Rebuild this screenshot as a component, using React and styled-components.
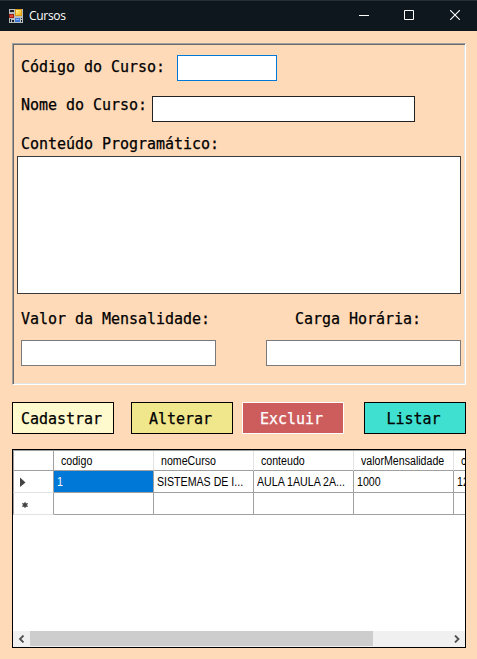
import React from 'react';
import styled, { createGlobalStyle } from 'styled-components';

const GlobalStyle = createGlobalStyle`
  * { box-sizing: border-box; }
  body { margin: 0; background: #ffdab9; overflow: hidden; }
`;

const Window = styled.div`
  width: 477px;
  height: 659px;
  background: #ffdab9;
  display: flex;
  flex-direction: column;
  overflow: hidden;
  color: #000;
`;

const TitleBar = styled.header`
  height: 31px;
  flex: none;
  background: #0e171d;
  border-top: 1px solid #252e34;
  display: flex;
  align-items: center;
  padding-left: 9px;
  color: #fff;
`;

const Title = styled.span`
  flex: 1;
  margin-left: 4px;
  font: 12px/16px 'Open Sans', sans-serif;
  letter-spacing: -0.3px;
`;

const Controls = styled.div`
  display: flex;
  height: 30px;
`;

const Control = styled.button`
  width: 46px;
  height: 28px;
  padding: 0;
  border: 0;
  background: transparent;
  display: grid;
  place-items: center;
  &:first-child { padding-left: 2px; }
  &:last-child { width: 45px; }
  svg { display: block; }
`;

const Content = styled.main`
  padding: 12px 11px 11px 12px;
`;

const Panel = styled.section`
  height: 342px;
  padding: 1px;
  border: 1px solid;
  border-color: #a0a0a0 #fff #fff #a0a0a0;
  box-shadow: inset 1px 1px #696969, inset -1px -1px #e3e3e3;
`;

const Field = styled.div`
  display: flex;
  padding-left: 7px;
  height: ${(p) => p.$height}px;
  padding-top: ${(p) => p.$top || 0}px;
`;

const Label = styled.label`
  font: 15px/20px 'DejaVu Sans Mono', monospace;
  letter-spacing: -0.03px;
  -webkit-text-stroke: 0.25px currentColor;
  white-space: pre;
  width: ${(p) => (p.$width ? p.$width + 'px' : 'auto')};
  margin-top: ${(p) => p.$top || 0}px;
`;

const TextBox = styled.input`
  display: block;
  width: ${(p) => p.$width}px;
  height: 26px;
  padding: 2px 4px;
  border: 1px solid ${(p) => p.$border || '#7a7a7a'};
  border-radius: 0;
  background: #fff;
  outline: 0;
`;

const TextArea = styled.textarea`
  display: block;
  width: 444px;
  height: 138px;
  margin-left: 3px;
  border: 1px solid #3a3a3a;
  border-radius: 0;
  background: #fff;
  resize: none;
  outline: 0;
`;

const Split = styled.div`
  display: flex;
  justify-content: space-between;
  padding: ${(p) => p.$top}px 3px 0 7px;
`;

const Actions = styled.div`
  display: grid;
  grid-template-columns: 119px 111px 122px 102px;
  margin-top: 17px;
`;

const Action = styled.button`
  width: 102px;
  height: 32px;
  padding: 1px 3px 0 0;
  border: 1px solid ${(p) => p.$border || '#000'};
  border-radius: 0;
  background: ${(p) => p.$fill};
  color: ${(p) => p.$color || '#000'};
  font: 15px/20px 'DejaVu Sans Mono', monospace;
  letter-spacing: -0.03px;
  -webkit-text-stroke: 0.25px currentColor;
  text-align: center;
`;

const Grid = styled.section`
  margin-top: 15px;
  height: 199px;
  border: 1px solid #000;
  background: #fff;
  overflow: hidden;
  display: flex;
  flex-direction: column;
`;

const Table = styled.div`
  flex: 1;
  width: 541px;
  border-top: 1px solid #a0a0a0;
`;

const Row = styled.div`
  display: grid;
  grid-template-columns: 41px repeat(5, 100px);
  height: ${(p) => p.$height}px;
`;

const Cell = styled.div`
  border-right: 1px solid #a0a0a0;
  border-bottom: 1px solid #a0a0a0;
  padding-left: 3px;
  overflow: hidden;
  white-space: nowrap;
  font: 12px/22px 'Liberation Sans', sans-serif;
  background: ${(p) => (p.$selected ? '#0078d7' : '#fff')};
  color: ${(p) => (p.$selected ? '#fff' : '#000')};
`;

const CellText = styled.span`
  display: block;
  width: max-content;
  transform: scaleX(0.885);
  transform-origin: 0 0;
`;

const HeadCell = styled(Cell)`
  padding-left: 7px;
  line-height: 21px;
  border-right-color: #e3e3e3;
`;

const RowHead = styled(Cell)`
  border-left: 1px solid #a0a0a0;
  border-bottom-color: ${(p) => (p.$dark ? '#a0a0a0' : '#e3e3e3')};
  padding: 0 0 0 6px;
  display: flex;
  align-items: center;
  svg { display: block; }
`;

const ScrollBar = styled.div`
  height: 16px;
  flex: none;
  display: flex;
  background: #f0f0f0;
`;

const ScrollButton = styled.div`
  width: 17px;
  height: 15px;
  display: grid;
  place-items: center;
`;

const Track = styled.div`
  flex: 1;
`;

const Thumb = styled.div`
  width: 343px;
  height: 15px;
  background: #cdcdcd;
`;

const columns = ['codigo', 'nomeCurso', 'conteudo', 'valorMensalidade', 'cargaHoraria'];
const values = ['1', 'SISTEMAS DE I...', 'AULA 1AULA 2A...', '1000', '120'];

function FormIcon() {
  return (
    <svg width="16" height="16" viewBox="0 0 16 16" shapeRendering="crispEdges">
      <defs>
        <linearGradient id="gold" x1="0" y1="0" x2="1" y2="1">
          <stop offset="0" stopColor="#fff0a0" />
          <stop offset="1" stopColor="#f0b400" />
        </linearGradient>
      </defs>
      <path fill="#b9bcbd" d="M0 1h14v14H0z" />
      <path fill="#17202a" d="M1 2h4v3H1zM1 11h1v3H1zM3 12h2v2H3zM12 10h1v1h-1zM12 12h1v2h-1z" />
      <path fill="#b9bcbd" d="M1 4h4v1H1z" />
      <path fill="#d89a18" d="M6 1h7v7H6z" />
      <path fill="url(#gold)" d="M7 2h5v5H7z" />
      <path fill="#9d2018" d="M0 6h5v4H0z" />
      <path fill="#e84a35" d="M1 7h3v2H1z" />
      <path fill="#3f78dc" d="M6 10h5v4H6z" />
      <path fill="#8bb4ff" d="M7 11h3v1H7z" />
    </svg>
  );
}

export default function App() {
  return (
    <Window>
      <GlobalStyle />
      <TitleBar>
        <FormIcon />
        <Title>Cursos</Title>
        <Controls>
          <Control aria-label="Minimizar">
            <svg width="10" height="10"><path d="M0 5.5h10" stroke="#fff" /></svg>
          </Control>
          <Control aria-label="Maximizar">
            <svg width="10" height="10"><path d="M.5.5h9v9h-9z" fill="none" stroke="#fff" /></svg>
          </Control>
          <Control aria-label="Fechar">
            <svg width="10" height="10"><path d="M0 0l10 10M10 0L0 10" stroke="#fff" strokeWidth="1.1" /></svg>
          </Control>
        </Controls>
      </TitleBar>
      <Content>
        <Panel>
          <Field $height={41} $top={10}>
            <Label $width={156} $top={2}>Código do Curso:</Label>
            <TextBox $width={100} $border="#0078d7" />
          </Field>
          <Field $height={48} $top={10}>
            <Label $width={131} $top={-1}>Nome do Curso:</Label>
            <TextBox $width={263} $border="#222" />
          </Field>
          <Field $height={22}>
            <Label>Conteúdo Programático:</Label>
          </Field>
          <TextArea />
          <Split $top={15}>
            <Label>Valor da Mensalidade:</Label>
            <Label $width={166}>Carga Horária:</Label>
          </Split>
          <Split $top={11}>
            <TextBox $width={195} />
            <TextBox $width={195} />
          </Split>
        </Panel>
        <Actions>
          <Action $fill="#fffacd">Cadastrar</Action>
          <Action $fill="#f0e68c">Alterar</Action>
          <Action $fill="#cd5c5c" $color="#fff" $border="#fff">Excluir</Action>
          <Action $fill="#40e0d0">Listar</Action>
        </Actions>
        <Grid>
          <Table>
            <Row $height={20}>
              <RowHead $dark />
              {columns.map((name) => (
                <HeadCell key={name}><CellText>{name}</CellText></HeadCell>
              ))}
            </Row>
            <Row $height={22}>
              <RowHead>
                <svg width="8" height="10"><path d="M0 0.5L5.5 5.5L0 10z" fill="#444" /></svg>
              </RowHead>
              {values.map((value, i) => (
                <Cell key={columns[i]} $selected={i === 0}><CellText>{value}</CellText></Cell>
              ))}
            </Row>
            <Row $height={22}>
              <RowHead>
                <svg width="10" height="8">
                  <circle cx="5" cy="5" r="2.3" fill="#555" />
                  <path d="M5 2v6M2 3.5l6 3M8 3.5L2 6.5" stroke="#444" strokeWidth="0.9" />
                </svg>
              </RowHead>
              {columns.map((name) => <Cell key={name} />)}
            </Row>
          </Table>
          <ScrollBar>
            <ScrollButton>
              <svg width="8" height="8"><path d="M5.5 .5L2 4L5.5 7.5" fill="none" stroke="#505050" strokeWidth="1.8" /></svg>
            </ScrollButton>
            <Track><Thumb /></Track>
            <ScrollButton>
              <svg width="8" height="8"><path d="M2 .5L5.5 4L2 7.5" fill="none" stroke="#505050" strokeWidth="1.8" /></svg>
            </ScrollButton>
          </ScrollBar>
        </Grid>
      </Content>
    </Window>
  );
}
